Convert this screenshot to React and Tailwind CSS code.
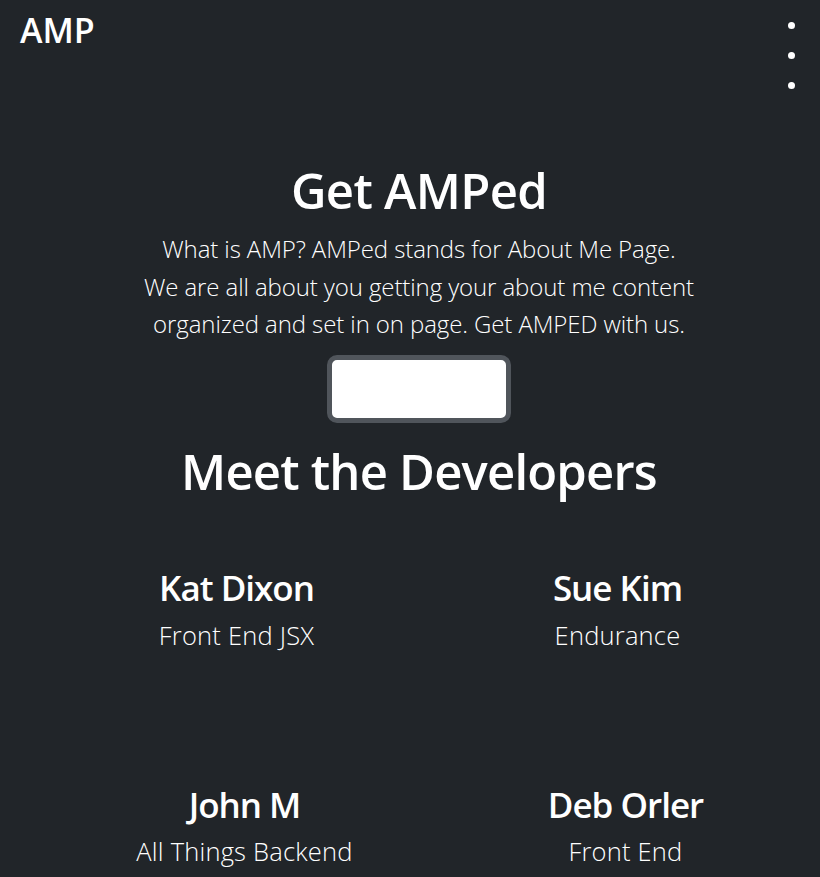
import React from "react";

const devs = [
  { name: "Kat Dixon", role: "Front End JSX", row: 1 },
  { name: "Sue Kim", role: "Endurance", row: 1 },
  { name: "John M", role: "All Things Backend", row: 2 },
  { name: "Deb Orler", role: "Front End", row: 2 },
];

const DevCard = ({ name, role, row }) => (
  <div className={row === 1 ? "text-center pr-[16px]" : "text-center mt-[130px]"}>
    <h3 className="text-[35px] font-semibold leading-[42px] tracking-[-1px]">{name}</h3>
    <p
      className={
        row === 1
          ? "mt-[8px] text-[25.5px] font-light leading-[37.5px] tracking-[0.2px]"
          : "mt-[7px] text-[25.5px] font-light leading-[37.5px] tracking-[0.2px]"
      }
    >
      {role}
    </p>
  </div>
);

export default function App() {
  return (
    <div
      className="min-h-screen bg-[#212529] text-white"
      style={{ fontFamily: '"Open Sans", "Noto Sans", sans-serif' }}
    >
      <nav className="flex items-start justify-between pl-[20px] pr-[25px]">
        <span className="pt-[9px] text-[34px] font-semibold leading-[42px]">AMP</span>
        <div className="flex flex-col gap-[23px] pt-[22px]">
          <span className="block h-[7px] w-[7px] rounded-full bg-white" />
          <span className="block h-[7px] w-[7px] rounded-full bg-white" />
          <span className="block h-[7px] w-[7px] rounded-full bg-white" />
        </div>
      </nav>

      <main className="pl-[18px] text-center">
        <h1 className="mt-[71px] text-[49px] font-semibold leading-[60px] tracking-[-0.7px]">Get AMPed</h1>
        <p className="mt-[10px] text-[24px] font-light leading-[37.5px] tracking-[-0.1px]">
          What is AMP? AMPed stands for About Me Page.
          <br />
          We are all about you getting your about me content
          <br />
          organized and set in on page. Get AMPED with us.
        </p>
        <button
          type="button"
          className="mt-[12px] h-[68px] w-[184px] rounded-[10px] border-[5px] border-[#50555b] bg-white"
        />
        <h2 className="mt-[17px] text-[49px] font-semibold leading-[60px] tracking-[-0.8px]">
          Meet the Developers
        </h2>

        <div className="ml-[36px] mt-[66px] grid w-[762px] grid-cols-2">
          {devs.map((d) => (
            <DevCard key={d.name} {...d} />
          ))}
        </div>
      </main>
    </div>
  );
}
